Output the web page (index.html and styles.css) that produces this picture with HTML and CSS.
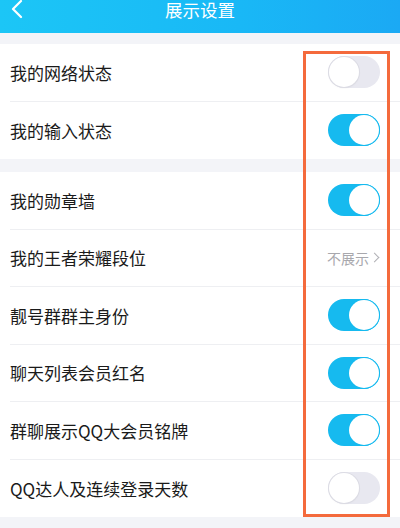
FILE: index.html
```html
<!DOCTYPE html>
<html lang="zh-CN">
<head>
    <meta charset="UTF-8">
    <meta name="viewport" content="width=device-width, initial-scale=1.0">
    <title>展示设置</title>
    <link rel="stylesheet" href="styles.css">
</head>
<body>

<div class="page">
    <!-- Title bar -->
    <div class="topbar">
        <svg class="back" width="12" height="20" viewBox="0 0 12 20">
            <path d="M10 2 L2 10 L10 18" fill="none" stroke="#fff" stroke-width="2.2" stroke-linecap="round" stroke-linejoin="round"/>
        </svg>
        <span class="title">展示设置</span>
    </div>

    <div class="group first">
        <div class="row">
            <span class="label">我的网络状态</span>
            <span class="switch"></span>
        </div>
        <div class="row">
            <span class="label">我的输入状态</span>
            <span class="switch on"></span>
        </div>
    </div>

    <div class="group">
        <div class="row">
            <span class="label">我的勋章墙</span>
            <span class="switch on"></span>
        </div>
        <div class="row">
            <span class="label">我的王者荣耀段位</span>
            <span class="more">不展示 <i class="arrow"></i></span>
        </div>
        <div class="row">
            <span class="label">靓号群群主身份</span>
            <span class="switch on"></span>
        </div>
        <div class="row">
            <span class="label">聊天列表会员红名</span>
            <span class="switch on"></span>
        </div>
        <div class="row">
            <span class="label">群聊展示QQ大会员铭牌</span>
            <span class="switch on"></span>
        </div>
        <div class="row">
            <span class="label">QQ达人及连续登录天数</span>
            <span class="switch"></span>
        </div>
    </div>

    <!-- highlight frame drawn over the switches -->
    <div class="mark"></div>
</div>

</body>
</html>
```

FILE: styles.css
```css
body {
    margin: 0;
    font-family: "Noto Sans CJK SC", "Noto Sans", sans-serif;
    background-color: #f3f4f8;
}

.page {
    position: relative;
    width: 400px;
    height: 528px;
    overflow: hidden;
}

.topbar {
    height: 33px;
    background: linear-gradient(90deg, #1cc6f6 0%, #19b8f6 60%, #1ba9f4 100%);
    position: relative;
    display: flex;
    justify-content: center;
    align-items: flex-start;
}

.topbar .back {
    position: absolute;
    left: 11px;
    top: -1px;
}

.topbar .title {
    color: #fff;
    font-size: 17.5px;
    line-height: 20px;
    margin-top: 0;
}

.group {
    background-color: #fff;
    margin-top: 13px;
}

.group.first {
    margin-top: 11px;
}

.row {
    height: 57.5px;
    display: flex;
    align-items: center;
    justify-content: space-between;
    margin-left: 10px;
    padding-right: 20px;
    border-bottom: 1px solid #eeeff2;
    box-sizing: border-box;
}

.row:last-child {
    border-bottom: none;
}

.label {
    font-size: 17px;
    color: #1a1a1a;
}

.switch {
    width: 52px;
    height: 32px;
    border-radius: 16px;
    background-color: #e8e8f0;
    position: relative;
    box-sizing: border-box;
}

.switch::after {
    content: "";
    position: absolute;
    left: 1px;
    top: 1px;
    width: 30px;
    height: 30px;
    border-radius: 50%;
    background-color: #fff;
    box-shadow: 0 0 0 1px #dcdce4, 0 1px 2px rgba(0, 0, 0, 0.08);
}

.switch.on {
    background-color: #16baef;
}

.switch.on::after {
    left: 21px;
    box-shadow: 0 0 0 1px #16baef;
}

.more {
    font-size: 14px;
    color: #a8a8ad;
    display: flex;
    align-items: center;
    margin-right: 2px;
}

.more .arrow {
    width: 6px;
    height: 6px;
    border-right: 1.5px solid #b0b0b5;
    border-top: 1.5px solid #b0b0b5;
    transform: rotate(45deg);
    margin-left: 2px;
}

.mark {
    position: absolute;
    left: 303px;
    top: 51px;
    width: 87px;
    height: 466px;
    border: 3px solid #f46a3c;
    box-sizing: border-box;
}
```
